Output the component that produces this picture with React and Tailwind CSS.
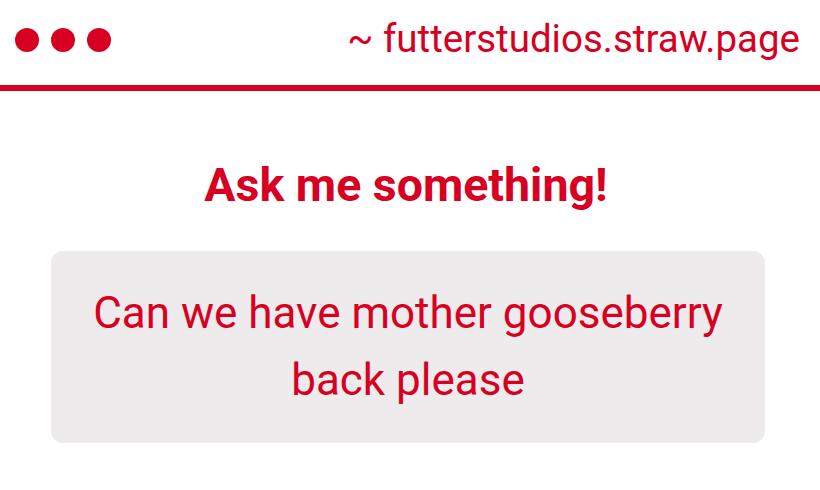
export default function App() {
  return (
    <div className="w-[820px] h-[490px] bg-white text-[#d80022] overflow-hidden" style={{ fontFamily: "Roboto, 'Liberation Sans', sans-serif" }}>
      <div className="h-[91px] pb-[6px] flex items-center justify-between pl-[15px] pr-[20px] border-b-[6px] border-[#d80022]">
        <div className="flex gap-[12px]">
          <span className="w-[24px] h-[24px] rounded-full bg-[#d80022]" />
          <span className="w-[24px] h-[24px] rounded-full bg-[#d80022]" />
          <span className="w-[24px] h-[24px] rounded-full bg-[#d80022]" />
        </div>
        <div className="text-[38.5px] leading-none whitespace-nowrap">~ futterstudios.straw.page</div>
      </div>
      <div className="flex flex-col items-center">
        <h1 className="mt-[71px] ml-[-8px] text-[46.5px] font-bold leading-none">Ask me something!</h1>
        <div className="mt-[42px] ml-[-4px] w-[714px] h-[192px] rounded-[12px] bg-[#edebec] flex items-center justify-center text-center text-[44px] leading-[67px] px-[30px]">
          Can we have mother gooseberry back please
        </div>
      </div>
    </div>
  );
}
